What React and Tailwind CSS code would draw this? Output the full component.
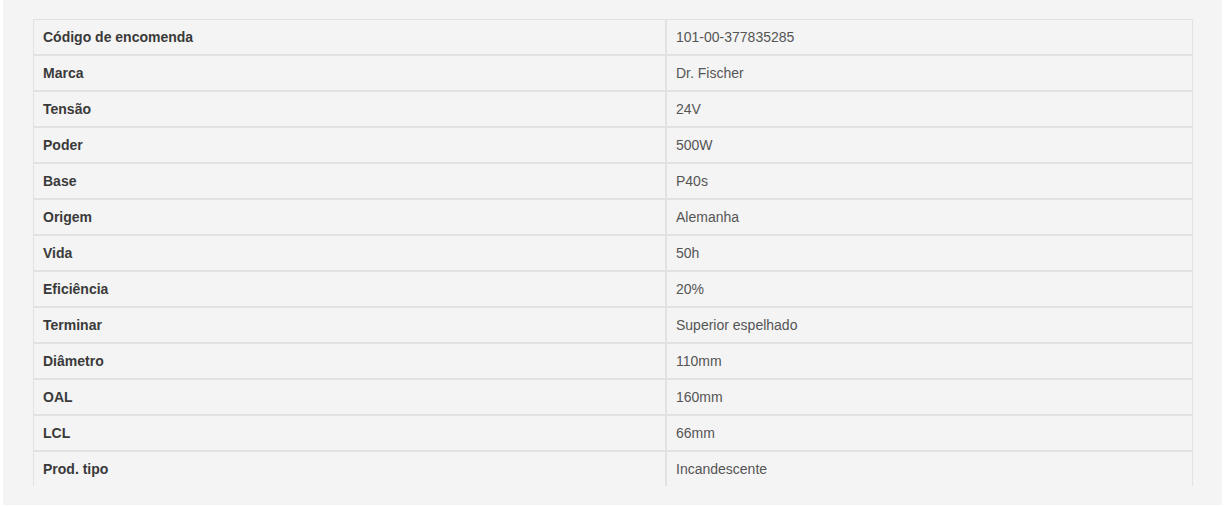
import React from "react";

const rows = [
  ["Código de encomenda", "101-00-377835285"],
  ["Marca", "Dr. Fischer"],
  ["Tensão", "24V"],
  ["Poder", "500W"],
  ["Base", "P40s"],
  ["Origem", "Alemanha"],
  ["Vida", "50h"],
  ["Eficiência", "20%"],
  ["Terminar", "Superior espelhado"],
  ["Diâmetro", "110mm"],
  ["OAL", "160mm"],
  ["LCL", "66mm"],
  ["Prod. tipo", "Incandescente"],
];

export default function App() {
  return (
    <div className="w-[1227px] h-[507px] bg-white font-['Liberation_Sans',Arial,sans-serif] text-[14px]">
      <div className="ml-[3px] w-[1219px] h-[505px] bg-[#f4f4f4] pt-[19px] pl-[30px] pr-[29px]">
        {/* tabela de especificações */}
        <div className="h-[467px] overflow-hidden">
          <div className="border border-[#e2e2e2] border-b-0">
            {rows.map(([label, value]) => (
              <div
                key={label}
                className="flex h-[36px] border-b-2 border-[#e2e2e2]"
              >
                <div className="w-[633px] border-r-2 border-[#e2e2e2] pl-[9px] flex items-center font-bold text-[#3a3a3a]">
                  {label}
                </div>
                <div className="flex-1 pl-[9px] flex items-center text-[#555]">
                  {value}
                </div>
              </div>
            ))}
          </div>
        </div>
      </div>
    </div>
  );
}
